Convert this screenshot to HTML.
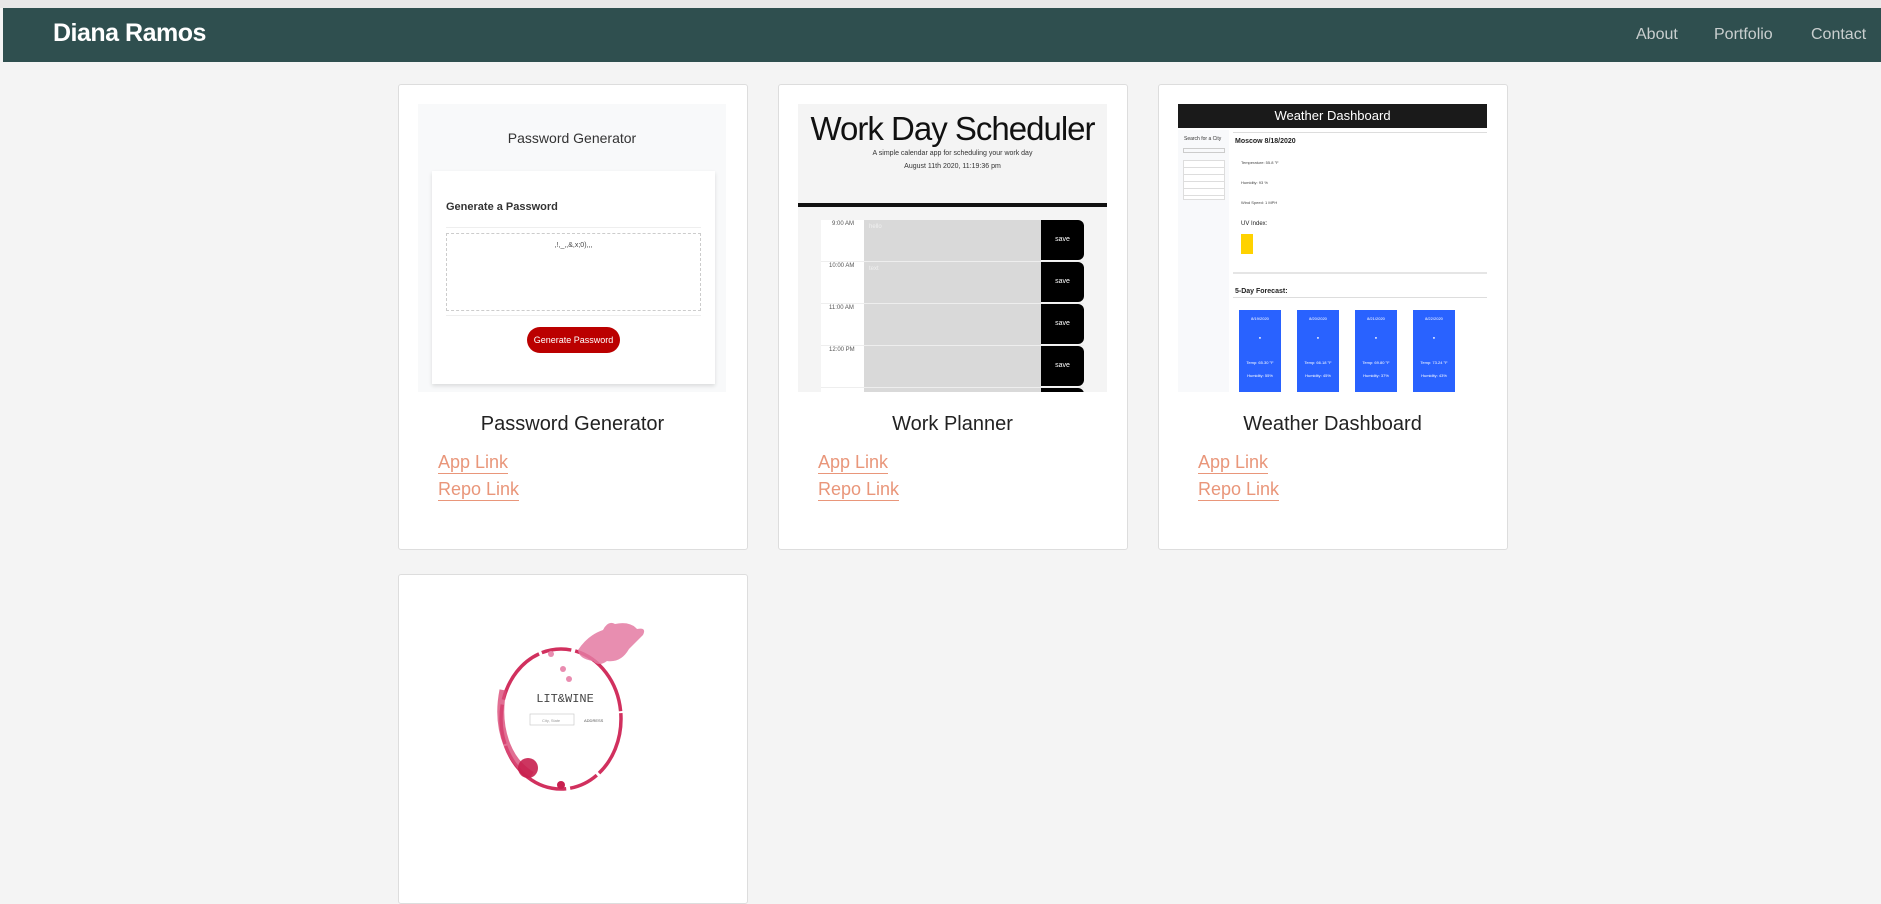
<!DOCTYPE html>
<html><head><meta charset="utf-8"><style>
*{box-sizing:border-box;margin:0;padding:0}
body{width:1881px;height:892px;overflow:hidden;background:#f4f4f4;font-family:"Liberation Sans",sans-serif;position:relative}
.abs{position:absolute}
.top{left:0;top:0;width:1881px;height:8px;background:#e8e8e8}
.nav{left:3px;top:8px;width:1878px;height:54px;background:#2f4f4f}
.brand{left:53px;top:19px;color:#fff;font-weight:bold;font-size:25px;letter-spacing:-0.5px}
.nl{top:26px;color:#c9cfcf;font-size:16px}
.card{background:#fff;border:1px solid #ddd;border-radius:3px}
.title{font-size:20px;color:#222;text-align:center;width:349px}
.lk{font-size:18px;color:#e9967a;border-bottom:1.5px solid #e9967a;line-height:22px}
.fc{width:42px;height:82px;background:#2962ff;color:#fff;font-size:4px;text-align:center}
</style></head><body>
<div class="abs top"></div>
<div class="abs nav"></div>
<div class="abs brand">Diana Ramos</div>
<div class="abs nl" style="left:1636px">About</div>
<div class="abs nl" style="left:1714px">Portfolio</div>
<div class="abs nl" style="left:1811px">Contact</div>

<div class="abs card" style="left:398px;top:84px;width:350px;height:466px"></div>
<div class="abs card" style="left:778px;top:84px;width:350px;height:466px"></div>
<div class="abs card" style="left:1158px;top:84px;width:350px;height:466px"></div>
<div class="abs card" style="left:398px;top:574px;width:350px;height:330px"></div>

<div class="abs" style="left:418px;top:104px;width:308px;height:288px;background:#f8f9fa">
  <div class="abs" style="left:0;top:26px;width:308px;text-align:center;font-size:14px;color:#333">Password Generator</div>
  <div class="abs" style="left:14px;top:67px;width:283px;height:213px;background:#fff;box-shadow:0 2px 4px rgba(0,0,0,.12)">
    <div class="abs" style="left:14px;top:30px;font-size:11px;color:#333;font-weight:bold">Generate a Password</div>
    <div class="abs" style="left:14px;top:56px;width:255px;height:1px;background:#eee"></div>
    <div class="abs" style="left:14px;top:62px;width:255px;height:78px;border:1px dashed #ccc"><div style="text-align:center;font-size:7px;color:#444;margin-top:8px">,!,_,,&amp;,x;0),,,</div></div>
    <div class="abs" style="left:14px;top:144px;width:255px;height:1px;background:#eee"></div>
    <div class="abs" style="left:95px;top:156px;width:93px;height:26px;background:#b00;border-radius:13px;color:#fff;font-size:9px;text-align:center;line-height:26px">Generate Password</div>
  </div>
</div>

<div class="abs" style="left:798px;top:104px;width:309px;height:288px;background:#f4f4f4;overflow:hidden">
  <div class="abs" style="left:-50px;top:6px;width:409px;text-align:center;font-size:33px;color:#111;white-space:nowrap;letter-spacing:-1px">Work Day Scheduler</div>
  <div class="abs" style="left:0;top:46px;width:309px;text-align:center;font-size:7px;color:#333">A simple calendar app for scheduling your work day</div>
  <div class="abs" style="left:0;top:59px;width:309px;text-align:center;font-size:7px;color:#333">August 11th 2020, 11:19:36 pm</div>
  <div class="abs" style="left:0;top:99px;width:309px;height:4px;background:#111"></div>
  <div class="abs" style="left:23px;top:116px;width:43px;height:180px;background:#fff"></div>
  <div class="abs" style="left:66px;top:116px;width:177px;height:180px;background:#d9d9d9"></div>
  <div class="abs" style="left:243px;top:116px;width:43px;height:40px;background:#000;border-radius:0 6px 6px 0;color:#fff;font-size:7px;text-align:center;line-height:40px">save</div>
  <div class="abs" style="left:243px;top:158px;width:43px;height:40px;background:#000;border-radius:0 6px 6px 0;color:#fff;font-size:7px;text-align:center;line-height:40px">save</div>
  <div class="abs" style="left:243px;top:200px;width:43px;height:40px;background:#000;border-radius:0 6px 6px 0;color:#fff;font-size:7px;text-align:center;line-height:40px">save</div>
  <div class="abs" style="left:243px;top:242px;width:43px;height:40px;background:#000;border-radius:0 6px 6px 0;color:#fff;font-size:7px;text-align:center;line-height:40px">save</div>
  <div class="abs" style="left:243px;top:284px;width:43px;height:40px;background:#000;border-radius:0 6px 6px 0"></div>
  <div class="abs" style="left:34px;top:117px;font-size:6px;color:#555">9:00 AM</div>
  <div class="abs" style="left:31px;top:159px;font-size:6px;color:#555">10:00 AM</div>
  <div class="abs" style="left:31px;top:201px;font-size:6px;color:#555">11:00 AM</div>
  <div class="abs" style="left:31px;top:243px;font-size:6px;color:#555">12:00 PM</div>
  <div class="abs" style="left:71px;top:120px;font-size:6px;color:#f0f0f0">hello</div>
  <div class="abs" style="left:71px;top:162px;font-size:6px;color:#f0f0f0">text</div>
  <div class="abs" style="left:23px;top:157px;width:263px;height:1px;background:#eee"></div>
  <div class="abs" style="left:23px;top:199px;width:263px;height:1px;background:#eee"></div>
  <div class="abs" style="left:23px;top:241px;width:263px;height:1px;background:#eee"></div>
  <div class="abs" style="left:23px;top:283px;width:263px;height:1px;background:#eee"></div>
</div>

<div class="abs" style="left:1178px;top:104px;width:309px;height:288px;background:#fff;overflow:hidden">
  <div class="abs" style="left:0;top:0;width:309px;height:24px;background:#1a1a1a;color:#fff;font-size:13px;text-align:center;line-height:24px">Weather Dashboard</div>
  <div class="abs" style="left:0;top:26px;width:51px;height:262px;background:#f8f9fb"></div>
  <div class="abs" style="left:6px;top:32px;font-size:5px;color:#333">Search for a City</div>
  <div class="abs" style="left:5px;top:44px;width:42px;height:5px;border:1px solid #ccc"></div>
  <div class="abs" style="left:5px;top:56px;width:42px;height:40px;border:1px solid #ddd;background:repeating-linear-gradient(#fff 0 6px,#ddd 6px 7px)"></div>
  <div class="abs" style="left:55px;top:28px;width:254px;height:1px;background:#ddd"></div>
  <div class="abs" style="left:57px;top:34px;font-size:7px;color:#222;font-weight:bold">Moscow 8/18/2020</div>
  <div class="abs" style="left:63px;top:56px;font-size:4px;color:#444">Temperature: 55.8 °F</div>
  <div class="abs" style="left:63px;top:76px;font-size:4px;color:#444">Humidity: 93 %</div>
  <div class="abs" style="left:63px;top:96px;font-size:4px;color:#444">Wind Speed: 1 MPH</div>
  <div class="abs" style="left:63px;top:117px;font-size:6px;color:#222">UV Index:</div>
  <div class="abs" style="left:63px;top:130px;width:12px;height:20px;background:#ffd200"></div>
  <div class="abs" style="left:55px;top:168px;width:254px;height:2px;background:#e5e5e5"></div>
  <div class="abs" style="left:57px;top:184px;font-size:7px;color:#222;font-weight:bold">5-Day Forecast:</div>
  <div class="abs" style="left:55px;top:193px;width:254px;height:1px;background:#ddd"></div>
  <div class="abs fc" style="left:61px;top:206px"><div style="margin-top:6px">8/19/2020</div><div style="margin-top:14px">●</div><div style="margin-top:20px">Temp: 65.30 °F</div><div style="margin-top:8px">Humidity: 55%</div></div>
  <div class="abs fc" style="left:119px;top:206px"><div style="margin-top:6px">8/20/2020</div><div style="margin-top:14px">●</div><div style="margin-top:20px">Temp: 66.18 °F</div><div style="margin-top:8px">Humidity: 45%</div></div>
  <div class="abs fc" style="left:177px;top:206px"><div style="margin-top:6px">8/21/2020</div><div style="margin-top:14px">●</div><div style="margin-top:20px">Temp: 69.80 °F</div><div style="margin-top:8px">Humidity: 37%</div></div>
  <div class="abs fc" style="left:235px;top:206px"><div style="margin-top:6px">8/22/2020</div><div style="margin-top:14px">●</div><div style="margin-top:20px">Temp: 73.24 °F</div><div style="margin-top:8px">Humidity: 43%</div></div>
</div>

<div class="abs title" style="left:398px;top:413px">Password Generator</div>
<div class="abs title" style="left:778px;top:413px">Work Planner</div>
<div class="abs title" style="left:1158px;top:413px">Weather Dashboard</div>
<div class="abs lk" style="left:438px;top:451px">App Link</div>
<div class="abs lk" style="left:438px;top:478px">Repo Link</div>
<div class="abs lk" style="left:818px;top:451px">App Link</div>
<div class="abs lk" style="left:818px;top:478px">Repo Link</div>
<div class="abs lk" style="left:1198px;top:451px">App Link</div>
<div class="abs lk" style="left:1198px;top:478px">Repo Link</div>

<svg class="abs" style="left:398px;top:580px" width="350" height="312">
  <ellipse cx="163" cy="139" rx="60" ry="70" fill="none" stroke="#d1305e" stroke-width="3.5" stroke-dasharray="60 3 30 4 80 2 40 5"/>
  <path d="M105 110 q-6 30 4 55 q8 20 25 30" fill="none" stroke="#d94b78" stroke-width="7" opacity=".8"/>
  <circle cx="130" cy="188" r="10" fill="#c8204f" opacity=".9"/>
  <circle cx="163" cy="205" r="4" fill="#c8204f"/>
  <path d="M180 70 q10 -15 25 -20 q5 -10 12 -6 q15 -3 22 5 q10 -2 6 6 q-8 8 -14 14 q-8 14 -22 12 q-8 6 -14 0 q-14 -2 -15 -11z" fill="#e47aa2" opacity=".85"/>
  <circle cx="153" cy="74" r="3" fill="#e98cb0"/>
  <circle cx="165" cy="89" r="3" fill="#e98cb0"/>
  <circle cx="171" cy="99" r="3" fill="#e98cb0"/>
  <text x="167" y="122" text-anchor="middle" font-family="Liberation Mono,monospace" font-size="12" fill="#444">LIT&amp;WINE</text>
  <rect x="132" y="134" width="44" height="11" fill="#fff" stroke="#ccc" stroke-width=".7"/>
  <text x="144" y="142" font-size="4" fill="#999" font-family="Liberation Sans,sans-serif">City, State</text>
  <text x="186" y="142" font-size="4" fill="#555" font-family="Liberation Sans,sans-serif">ADDRESS</text>
</svg>
</body></html>
